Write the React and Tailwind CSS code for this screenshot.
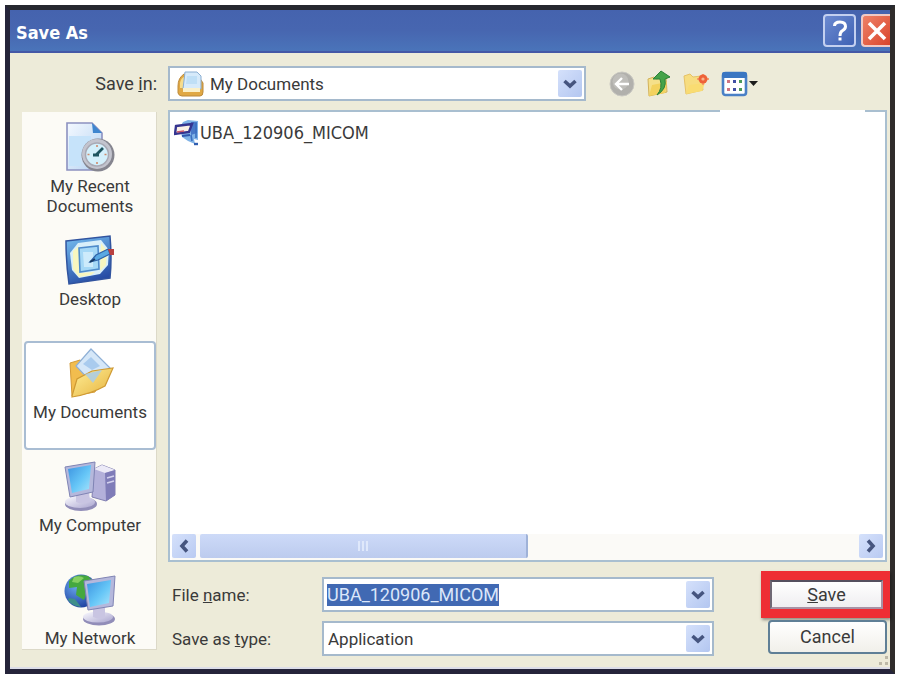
import React, { useState } from 'react';

function RecentIcon() {
  return (
    <svg viewBox="0 0 50 50" className="size-[50px]">
      <defs>
        <linearGradient id="page" x1="0" y1="0" x2="1" y2="1">
          <stop offset="0" stopColor="#f4f9ff" />
          <stop offset="1" stopColor="#b4d2f2" />
        </linearGradient>
      </defs>
      <path d="M2 1 H27 L37 11 V48 H2 Z" fill="url(#page)" stroke="#8c91c0" strokeWidth="1.6" />
      <path d="M4 14 H26 V34 H16 V44 H4 Z" fill="#c6e3fa" />
      <path d="M27 1 L37 11 H28 Z" fill="#3f86cf" />
      <circle cx="33" cy="33" r="16.500" fill="#85858f" />
      <circle cx="32" cy="32" r="15" fill="#c3c4ce" />
      <circle cx="32" cy="32.500" r="11.500" fill="#d3effb" stroke="#a9a9b4" strokeWidth="1.500" />
      <path d="M32 23 V25 M32 40 V42 M22.500 32.500 H24.500 M39.500 32.500 H41.500" stroke="#d08a6a" strokeWidth="1.600" />
      <path d="M38 26 L31 33 M28 33 H34" stroke="#1f5560" strokeWidth="2.800" fill="none" />
    </svg>
  );
}

function DesktopIcon() {
  return (
    <svg viewBox="0 0 50 50" className="size-[50px]">
      <defs>
        <linearGradient id="pad" x1=".3" y1="0" x2=".7" y2="1">
          <stop offset="0" stopColor="#6fb4ea" />
          <stop offset="1" stopColor="#2145a0" />
        </linearGradient>
      </defs>
      <path d="M1 6 L45 1 Q47 24 45 43 L4 49 Q1 28 1 6 Z" fill="url(#pad)" stroke="#31549f" strokeWidth="1.500" />
      <path d="M13 8 L36 5 L44 15 L43 30 L35 39 L14 43 L7 35 L5 18 Z" fill="#d8effa" />
      <path d="M8 16 L14 11 V38 L30 37 L26 40 L14 42 L8 34 Z" fill="#f8f6bf" />
      <path d="M36 8 L42 16 L41 30 L35 36 Z" fill="#f8f6bf" />
      <path d="M14 13 L33 11 L34 34 L15 37 Z" fill="#a5d8f6" stroke="#4f8ccb" strokeWidth="1.600" />
      <path d="M18 17 H28 V32 H19 Z" fill="#cdebfb" />
      <path d="M25 27 L31 20 L43 14 L45 19 L33 25 Z" fill="#5aa9e2" stroke="#2e62a8" strokeWidth="1.200" />
      <path d="M25 27 L30 24" stroke="#163a66" strokeWidth="2" />
      <path d="M43 14 L49 14 L49 20 L45 20 Z" fill="#b8403f" />
    </svg>
  );
}

function DocumentsIcon() {
  return (
    <svg viewBox="0 0 50 50" className="size-[50px]">
      <defs>
        <linearGradient id="folder" x1="0" y1="0" x2="1" y2="1">
          <stop offset="0" stopColor="#fff09a" />
          <stop offset="1" stopColor="#e6b23c" />
        </linearGradient>
      </defs>
      <path d="M5 15 L15 12 L25 20 L40 22 L30 44 L7 48 Z" fill="#f2bd4e" stroke="#d49b38" strokeWidth="1" />
      <path d="M26 1 L45 20 L28 36 L11 18 Z" fill="#d5e7f8" stroke="#8fb0d6" strokeWidth="1.200" />
      <path d="M26 9 L35 18 L27 22 L18 16 Z" fill="#a9cbee" />
      <path d="M7 48 L12 31 L27 23 L48 20 L40 38 Q26 46 7 49 Z" fill="url(#folder)" stroke="#cf9a33" strokeWidth="1.200" />
      <path d="M20 26 L37 22 L28 35 Z" fill="#a8cdea" opacity=".85" />
    </svg>
  );
}

function ScreenGradient() {
  return (
    <defs>
      <linearGradient id="screen" x1="0" y1="0" x2="1" y2="1">
        <stop offset="0" stopColor="#3c93e0" />
        <stop offset=".55" stopColor="#66c6f7" />
        <stop offset="1" stopColor="#a8e4fb" />
      </linearGradient>
      <linearGradient id="stand" x1="0" y1="0" x2="1" y2="1">
        <stop offset="0" stopColor="#fbfbff" />
        <stop offset="1" stopColor="#aaa5cf" />
      </linearGradient>
    </defs>
  );
}

function ComputerIcon() {
  return (
    <svg viewBox="0 0 52 52" className="size-[52px]">
      <ScreenGradient />
      <path d="M30 8 L38 4 L51 9 V34 L42 40 L28 36 Z" fill="#b3b0da" stroke="#8280b0" strokeWidth="1" />
      <path d="M30 8 L38 4 L51 9 L41 12 Z" fill="#eceaf7" />
      <path d="M41 12 L51 9 V34 L42 40 Z" fill="#7f7cb8" />
      <path d="M43 17 L50 15 M43 22 L50 20" stroke="#d3d1ee" strokeWidth="1.600" />
      <ellipse cx="17" cy="43" rx="16" ry="7" fill="#918db8" />
      <ellipse cx="16" cy="41" rx="15" ry="6" fill="url(#stand)" />
      <path d="M12 33 L25 30 L26 41 Q18 44 12 41 Z" fill="#c9c5e2" />
      <path d="M1 6 L31 1 L29 31 L6 36 Z" fill="#b5b8dc" stroke="#8084b4" strokeWidth="1" />
      <path d="M4 8 L27 4 L25 28 L8 32 Z" fill="url(#screen)" />
    </svg>
  );
}

function NetworkIcon() {
  return (
    <svg viewBox="0 0 52 52" className="size-[52px]">
      <defs>
        <radialGradient id="globe" cx=".35" cy=".35" r=".7">
          <stop offset="0" stopColor="#6aa8ee" />
          <stop offset="1" stopColor="#1d3f9f" />
        </radialGradient>
      </defs>
      <ScreenGradient />
      <circle cx="17" cy="17" r="16.500" fill="url(#globe)" />
      <path d="M5 7 Q12 -1 24 2 L31 9 L24 14 L20 26 L12 21 L13 13 L5 14 Z" fill="#45a83f" />
      <path d="M10 3 Q16 1 20 4 L14 9 L8 8 Z" fill="#86cf62" />
      <path d="M5 24 L11 25 L17 33 Q8 32 4 26 Z" fill="#3f8f8a" />
      <ellipse cx="35" cy="45" rx="16" ry="6.500" fill="#918db8" />
      <ellipse cx="34" cy="43" rx="15" ry="5.500" fill="url(#stand)" />
      <path d="M29 34 L41 33 L41 44 Q35 46 29 43 Z" fill="#c9c5e2" />
      <path d="M20 7 L51 2 L49 32 L24 36 Z" fill="#b5b8dc" stroke="#8084b4" strokeWidth="1" />
      <path d="M23 10 L47 6 L45 29 L26 33 Z" fill="url(#screen)" />
    </svg>
  );
}

function SmallDocsIcon() {
  return (
    <svg viewBox="0 0 28 26" className="h-[26px] w-[28px]">
      <path d="M7 3 Q1 7 1 15 V22 Q2 25 5 25 H23 Q26 25 26 21 V12 L22 6 Z" fill="#e0a844" stroke="#bd8a3a" strokeWidth="1" />
      <path d="M3 12 Q4 7 7 6 V17 H3 Z" fill="#f6dc8c" />
      <path d="M8 1 H20 L24 5 V18 H6 Z" fill="#d6eafa" stroke="#8aaed2" strokeWidth="1" />
      <path d="M10 5 H20 V13 H9 Z" fill="#bfdff6" />
      <path d="M6 17 H23 V21 H6 Z" fill="#fbf0c8" />
    </svg>
  );
}

function ZipIcon() {
  return (
    <svg viewBox="0 0 26 27" className="h-[27px] w-[26px] shrink-0">
      <path d="M9 3 L14 1 L24 2 V21 L20 20 L21 25 L14 22 L8 18 L6 8 Z" fill="#7fb2e6" />
      <path d="M17 3 H23 V14 L17 16 Z" fill="#4878c8" />
      <path d="M2 7 L18 5 L15 13 L1 15 Z" fill="#fbf1e6" stroke="#35348f" strokeWidth="2.400" />
      <path d="M3 13 L10 12" stroke="#c9566a" strokeWidth="1.600" />
      <path d="M8 17 L16 16" stroke="#2f57ad" strokeWidth="2" />
      <path d="M17 16 L18 22 M22 4 V19" stroke="#3a6fc0" strokeWidth="1.600" />
      <path d="M20 25 H24" stroke="#315fb0" strokeWidth="2.400" />
    </svg>
  );
}

function BackIcon() {
  return (
    <svg viewBox="0 0 26 26" className="size-[26px]">
      <circle cx="13" cy="13" r="12" fill="#b1b0ac" stroke="#c9c8c2" strokeWidth="1" />
      <circle cx="11.500" cy="10.500" r="8" fill="#bfbeba" />
      <path d="M20 13 H8 M13 7 L7 13 L13 19" fill="none" stroke="#fff" strokeWidth="2.400" />
    </svg>
  );
}

function UpIcon() {
  return (
    <svg viewBox="0 0 24 28" className="h-[28px] w-[24px]">
      <path d="M1 9 L7 7 L9 9 L19 7 L20 22 L2 26 Z" fill="#f5e08a" stroke="#d3b25a" strokeWidth="1" />
      <path d="M2 26 L5 15 L20 12 L18 23 Z" fill="#f3d25e" />
      <path d="M10 25 Q16 18 13 9 L6 9 L14 1 L23 7 L18 9 Q20 19 10 25 Z" fill="#45a349" stroke="#2b8038" strokeWidth="1" />
    </svg>
  );
}

function NewFolderIcon() {
  return (
    <svg viewBox="0 0 26 24" className="h-[24px] w-[26px]">
      <path d="M1 4 L7 2 L10 5 L18 4 L20 18 L3 22 Z" fill="#f7dd80" stroke="#e6c266" strokeWidth="1" />
      <path d="M3 22 L6 13 L22 11 L19 19 Z" fill="#f9dc72" />
      <path d="M20 2 V13 M14 7 H26" stroke="#f3a070" strokeWidth="2" />
      <circle cx="20" cy="7" r="4.500" fill="#ee6238" />
      <circle cx="20" cy="7" r="1.600" fill="#f9b48c" />
    </svg>
  );
}

function ViewsIcon() {
  return (
    <svg viewBox="0 0 38 26" className="h-[26px] w-[38px]">
      <rect x="2" y="2" width="23" height="22" rx="2.500" fill="#fff" stroke="#4a80c6" strokeWidth="2.600" />
      <rect x="1" y="1" width="25" height="6" rx="2" fill="#3a76c2" />
      <path d="M6 9 H9 V12 H6 Z M6 17 H9 V20 H6 Z" fill="#cf7480" />
      <path d="M12 9 H15 V12 H12 Z M12 17 H15 V20 H12 Z" fill="#3f4fa4" />
      <path d="M18 9 H21 V12 H18 Z M18 17 H21 V20 H18 Z" fill="#4c9a5a" />
      <path d="M28 10 H37 L32.500 15 Z" fill="#1c1c1c" />
    </svg>
  );
}

function Chevron({ className }) {
  return (
    <svg viewBox="0 0 14 14" className={`size-[14px] ${className || ''}`}>
      <path d="M1.500 4 L7 9 L12.500 4" fill="none" stroke="#46557f" strokeWidth="3.600" />
    </svg>
  );
}

// the blue drop-down button at the right end of a combo box
function DropArrow() {
  return (
    <span className="pointer-events-none flex w-[24px] shrink-0 items-center justify-center rounded-xs bg-linear-to-br from-[#d5e1fb] to-[#b3c6f0]">
      <Chevron />
    </span>
  );
}

const places = [
  { name: 'My Recent Documents', icon: RecentIcon },
  { name: 'Desktop', icon: DesktopIcon },
  { name: 'My Documents', icon: DocumentsIcon },
  { name: 'My Computer', icon: ComputerIcon },
  { name: 'My Network', icon: NetworkIcon },
];

const combo = 'flex h-[35px] border-2 border-[#a5b9cc] bg-white p-[2px]';
const field = 'appearance-none bg-transparent text-[17px] outline-none';

export default function App() {
  const [place, setPlace] = useState('My Documents');
  const [fileName, setFileName] = useState('UBA_120906_MICOM');

  return (
    <div className="bg-white p-[5px] pr-[6px] font-['Roboto',sans-serif] text-[18px] leading-[20px] text-[#3a3a3a]">
      <div className="border-[5px] border-[#25243a] border-t-[#26282f] border-r-[#2f2c2b]">
        <header className="flex h-[43px] items-center border-b-2 border-[#4458a6] bg-linear-to-b from-[#4563ae] via-[#4766b0] to-[#4a74ba] pl-[6px]">
          <h1 className="flex-1 pt-[4px] font-['DejaVu_Sans_Condensed','DejaVu_Sans',sans-serif] text-[18px] font-bold text-white">Save As</h1>
          <button aria-label="Help" className="mr-[5px] flex size-[33px] items-center justify-center rounded-[4px] border-2 border-[#c3d0f0] bg-linear-to-br from-[#6c8ad0] to-[#3f62b4]">
            <svg viewBox="0 0 20 24" className="h-[24px] w-[20px]">
              <path d="M4.500 7 Q4.500 3 10 3 Q15.500 3 15.500 7.500 Q15.500 10 12 12 Q10 13.500 10 17" fill="none" stroke="#fff" strokeWidth="3" />
              <path d="M8.500 18.500 H11.500 V21.500 H8.500 Z" fill="#fff" />
            </svg>
          </button>
          <button aria-label="Close" className="flex h-[33px] w-[29px] items-center justify-center rounded-l-[4px] border-2 border-r-0 border-[#f0c9c4] bg-linear-to-br from-[#ee8067] to-[#d9432a]">
            <svg viewBox="0 0 20 20" className="size-[20px]">
              <path d="M2 2 L18 18 M18 2 L2 18" stroke="#fff" strokeWidth="3.600" />
            </svg>
          </button>
        </header>

        <main className="relative border-b-2 border-[#dcdde8] bg-[#edebd9] pt-[13px] pr-[3px] pb-[11px] pl-[12px]">
          <div className="flex items-center">
            <label htmlFor="save-in" className="w-[135px] text-right">Save <u>i</u>n:</label>
            <div className={`${combo} ml-[11px] w-[418px]`}>
              <span className="ml-[5px] flex items-center"><SmallDocsIcon /></span>
              <select id="save-in" className={`${field} ml-[5px] min-w-0 flex-1`}>
                <option>My Documents</option>
              </select>
              <DropArrow />
            </div>
            <div className="ml-[23px] flex items-center gap-[12px]">
              <button aria-label="Back"><BackIcon /></button>
              <button aria-label="Up one level"><UpIcon /></button>
              <button aria-label="New folder"><NewFolderIcon /></button>
              <button aria-label="Views"><ViewsIcon /></button>
            </div>
          </div>

          <div className="mt-[9px] flex gap-[11px]">
            <nav className="mt-[2px] mb-[6px] flex w-[135px] shrink-0 flex-col gap-[4px] border-r border-b border-[#dcd9c8] bg-[#fcfbf6] pt-[3px] pl-[2px]">
              {places.map(({ name, icon: Icon }) => (
                <button
                  key={name}
                  onClick={() => setPlace(name)}
                  className={`flex h-[109px] flex-col items-center rounded-[4px] border-2 pt-[5px] last:h-[80px] ${
                    place === name ? 'border-[#a9bdd3] bg-white' : 'border-transparent'
                  }`}
                >
                  <span className="flex h-[54px] shrink-0 items-start"><Icon /></span>
                  <span className={`text-[17px] ${name === 'My Recent Documents' ? 'w-[100px]' : 'whitespace-nowrap'}`}>{name}</span>
                </button>
              ))}
            </nav>

            <div className="flex min-w-0 flex-1 flex-col">
              <section className="relative flex h-[452px] flex-col justify-between border-2 border-[#a9bfd0] bg-white px-[2px] pt-[7px]">
                <span className="absolute -top-[2px] right-[20px] h-[2px] w-[145px] bg-white" />
                <button className="flex items-center self-start pl-[2px] font-['DejaVu_Sans_Condensed','DejaVu_Sans',sans-serif]">
                  <ZipIcon />
                  UBA_120906_MICOM
                </button>
                <div className="flex h-[26px] items-center gap-[4px] bg-[#fbfaf7] pb-[2px]">
                  <button aria-label="Scroll left" className="flex size-[24px] items-center justify-center rounded-xs bg-linear-to-br from-[#d5e1fb] to-[#b9caf2]">
                    <Chevron className="rotate-90" />
                  </button>
                  <div className="flex flex-1">
                    <div className="flex h-[24px] w-1/2 items-center justify-center gap-[2px] rounded-xs border-r-2 border-[#9fb2d8] bg-linear-to-b from-[#cddaf8] to-[#bccbee]">
                      <i className="h-[10px] w-[2px] bg-[#dfe8fb]" />
                      <i className="h-[10px] w-[2px] bg-[#dfe8fb]" />
                      <i className="h-[10px] w-[2px] bg-[#dfe8fb]" />
                    </div>
                  </div>
                  <button aria-label="Scroll right" className="flex size-[24px] items-center justify-center rounded-xs bg-linear-to-br from-[#d5e1fb] to-[#b9caf2]">
                    <Chevron className="-rotate-90" />
                  </button>
                </div>
              </section>

              <form className="flex" onSubmit={(e) => e.preventDefault()}>
                <div className="flex flex-1 flex-col gap-[9px] pt-[15px]">
                  <div className="flex items-center">
                    <label htmlFor="file-name" className="w-[154px] pl-[4px] text-[17px]">File <u>n</u>ame:</label>
                    <div className={`${combo} flex-1 items-stretch`}>
                      <span className="flex min-w-0 flex-1 items-center">
                        <input
                          id="file-name"
                          value={fileName}
                          onChange={(e) => setFileName(e.target.value)}
                          className="field-sizing-content ml-[1px] h-[22px] bg-[#4169b3] text-[#dbe6fa] outline-none"
                        />
                      </span>
                      <DropArrow />
                    </div>
                  </div>
                  <div className="flex items-center">
                    <label htmlFor="file-type" className="w-[154px] pl-[4px] text-[17px]">Save as <u>t</u>ype:</label>
                    <div className={`${combo} flex-1`}>
                      <select id="file-type" className={`${field} ml-[2px] min-w-0 flex-1`}>
                        <option>Application</option>
                      </select>
                      <DropArrow />
                    </div>
                  </div>
                </div>
                <div className="-mr-[3px] ml-[47px] flex w-[129px] flex-col gap-[2px] pt-[9px]">
                  <div className="h-[47px] bg-[#ee2e34] py-[9px] pr-[7px] pl-[9px] shadow-[1px_2px_3px_#00000066]">
                    <button type="submit" className="h-full w-full border-2 border-[#a892a4] border-t-[#55505f] border-l-[#6f6874] bg-linear-to-b from-white to-[#efeef0]">
                      <u>S</u>ave
                    </button>
                  </div>
                  <button type="button" className="mr-[3px] ml-[7px] h-[34px] rounded-[4px] border-2 border-[#5f7f96] bg-linear-to-b from-white to-[#f1f0ea]">
                    Cancel
                  </button>
                </div>
              </form>
            </div>
          </div>
          <svg viewBox="0 0 12 12" className="absolute right-[1px] bottom-0 size-[12px]">
            <path d="M8 1 H11 V4 H8 Z M2 7 H5 V10 H2 Z M8 7 H11 V10 H8 Z" fill="#bdb9a8" />
          </svg>
        </main>
      </div>
    </div>
  );
}
